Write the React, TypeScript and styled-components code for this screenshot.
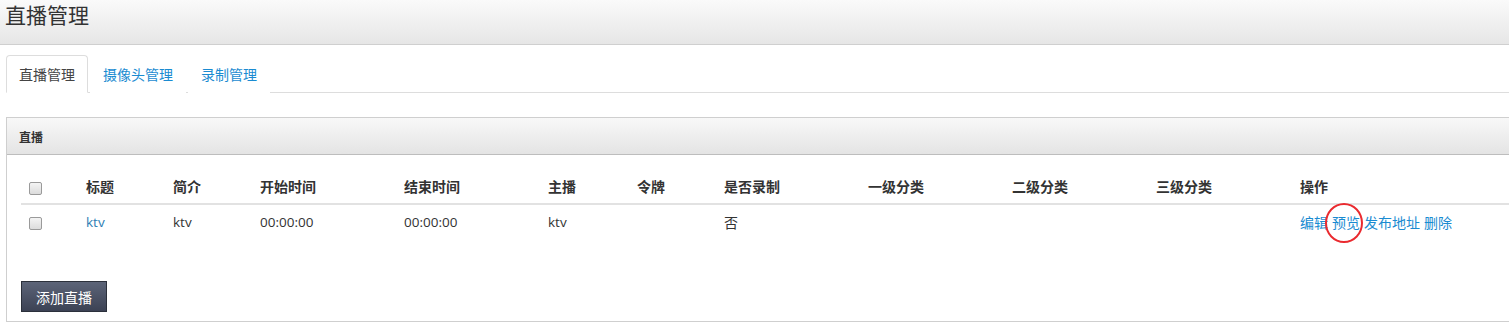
import React from "react";
import styled, { createGlobalStyle } from "styled-components";

const Global = createGlobalStyle`
  html, body { margin: 0; padding: 0; background: #fff; overflow: hidden; }
  body { font-family: "Open Sans", "Noto Sans CJK SC", sans-serif; color: #333; font-size: 13px; }
`;

const Page = styled.div`
  width: 1509px;
`;

const TopBar = styled.div`
  height: 44px;
  border-bottom: 1px solid #cfcfcf;
  background: linear-gradient(#fafafa, #e6e6e6);
  padding-left: 5px;
`;

const PageTitle = styled.h1`
  margin: 0;
  font-family: "Noto Sans CJK SC", sans-serif;
  font-weight: 400;
  font-size: 21px;
  line-height: 28px;
  color: #333;
`;

const Content = styled.div`
  padding: 10px 0 0 6px;
`;

const Tabs = styled.div`
  display: flex;
  align-items: flex-end;
  border-bottom: 1px solid #ddd;
  height: 37px;
`;

const Tab = styled.div<{ $active?: boolean }>`
  box-sizing: border-box;
  display: flex;
  align-items: center;
  padding: 0 12px;
  margin-right: 2px;
  margin-bottom: -1px;
  height: 38px;
  border: 1px solid ${(p) => (p.$active ? "#ddd" : "transparent")};
  border-bottom-color: ${(p) => (p.$active ? "#fff" : "transparent")};
  border-radius: 4px 4px 0 0;
  background: #fff;
  color: ${(p) => (p.$active ? "#444" : "#1a8bd1")};
  font-family: "Noto Sans CJK SC", sans-serif;
  font-size: 14px;
`;

const Panel = styled.div`
  margin-top: 24px;
  margin-right: -30px;
  border: 1px solid #cfcfcf;
`;

const PanelHeading = styled.div`
  height: 37px;
  box-sizing: border-box;
  border-bottom: 1px solid #bdbdbd;
  background: linear-gradient(#f8f8f8, #e4e4e4);
  padding-left: 12px;
  display: flex;
  align-items: center;
  font-family: "Noto Sans CJK SC", sans-serif;
  font-weight: 700;
  font-size: 12px;
  color: #333;
`;

const PanelBody = styled.div`
  padding: 14px 14px 9px 14px;
`;

const Table = styled.table`
  width: 1509px;
  border-collapse: collapse;
  font-size: 13.5px;
  font-family: "Open Sans", "Noto Sans CJK SC", sans-serif;
  table-layout: fixed;
`;

const Th = styled.th<{ $w?: number }>`
  width: ${(p) => (p.$w ? `${p.$w}px` : "auto")};
  text-align: left;
  font-weight: 700;
  padding: 0 8px;
  height: 35px;
  box-sizing: border-box;
  border-bottom: 2px solid #e2e2e2;
  color: #333;
  font-family: "Noto Sans CJK SC", sans-serif;
  font-size: 14px;
`;

const Td = styled.td<{ $cjk?: boolean }>`
  padding: 0 8px;
  height: 35px;
  box-sizing: border-box;
  color: #333;
  vertical-align: middle;
  font-family: ${(p) => (p.$cjk ? '"Noto Sans CJK SC", sans-serif' : "inherit")};
  font-size: ${(p) => (p.$cjk ? "14px" : "inherit")};
`;

const Check = styled.span`
  display: inline-block;
  width: 11px;
  height: 11px;
  border: 1px solid #9a9a9a;
  border-radius: 2px;
  background: linear-gradient(#f4f4f4, #dcdcdc);
  vertical-align: middle;
`;

const TitleLink = styled.a`
  color: #2d7db3;
  text-decoration: none;
`;

const Actions = styled.div`
  display: flex;
  gap: 4px;
  white-space: nowrap;
`;

const ActionLink = styled.a`
  position: relative;
  color: #1a8bd1;
  text-decoration: none;
  font-family: "Noto Sans CJK SC", sans-serif;
  font-size: 14px;
`;

const Circle = styled.span`
  position: absolute;
  left: -7px;
  top: -9px;
  width: 34px;
  height: 36px;
  border: 2.5px solid #ea2a2f;
  border-radius: 50%;
  pointer-events: none;
`;

const AddButton = styled.button`
  display: block;
  margin-top: 42px;
  height: 31px;
  width: 86px;
  border: 1px solid #2b303b;
  background: linear-gradient(#5c6478, #3c4254);
  color: #fff;
  font-family: "Noto Sans CJK SC", sans-serif;
  font-size: 14px;
  padding: 0;
`;

const cols: [string, number][] = [
  ["", 57],
  ["标题", 87],
  ["简介", 87],
  ["开始时间", 144],
  ["结束时间", 144],
  ["主播", 89],
  ["令牌", 87],
  ["是否录制", 144],
  ["一级分类", 144],
  ["二级分类", 144],
  ["三级分类", 144],
  ["操作", 0],
];

export default function App() {
  return (
    <Page>
      <Global />
      <TopBar>
        <PageTitle>直播管理</PageTitle>
      </TopBar>
      <Content>
        <Tabs>
          <Tab $active>直播管理</Tab>
          <Tab>摄像头管理</Tab>
          <Tab>录制管理</Tab>
        </Tabs>
        <Panel>
          <PanelHeading>直播</PanelHeading>
          <PanelBody>
            <Table>
              <thead>
                <tr>
                  {cols.map(([label, w], i) => (
                    <Th key={i} $w={w || undefined}>
                      {i === 0 ? <Check /> : label}
                    </Th>
                  ))}
                </tr>
              </thead>
              <tbody>
                <tr>
                  <Td><Check /></Td>
                  <Td><TitleLink>ktv</TitleLink></Td>
                  <Td>ktv</Td>
                  <Td>00:00:00</Td>
                  <Td>00:00:00</Td>
                  <Td>ktv</Td>
                  <Td></Td>
                  <Td $cjk>否</Td>
                  <Td></Td>
                  <Td></Td>
                  <Td></Td>
                  <Td>
                    <Actions>
                      <ActionLink>编辑</ActionLink>
                      <ActionLink>
                        预览
                        <Circle />
                      </ActionLink>
                      <ActionLink>发布地址</ActionLink>
                      <ActionLink>删除</ActionLink>
                    </Actions>
                  </Td>
                </tr>
              </tbody>
            </Table>
            <AddButton>添加直播</AddButton>
          </PanelBody>
        </Panel>
      </Content>
    </Page>
  );
}
